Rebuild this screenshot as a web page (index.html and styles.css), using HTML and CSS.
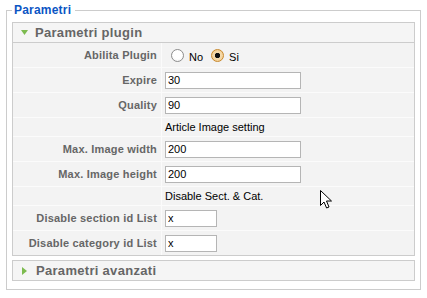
FILE: index.html
```html
<!DOCTYPE html>
<html>
<head>
<meta charset="utf-8">
<link rel="stylesheet" href="styles.css">
</head>
<body>
<fieldset class="box">
  <legend class="box-title">Parametri</legend>
  <div class="panel panel-open">
    <h3 class="panel-head"><svg class="arrow-down" width="7" height="5" viewBox="0 0 7 5"><polygon points="0,0 7,0 3.5,5" fill="#7dbb4f"/></svg>Parametri plugin</h3>
    <div class="params">
      <div class="row">
        <div class="key">Abilita Plugin</div>
        <div class="val">
          <span class="radio"></span><span class="radio-label">No</span>
          <span class="radio radio-on"></span><span class="radio-label">Si</span>
        </div>
      </div>
      <div class="row">
        <div class="key">Expire</div>
        <div class="val"><input class="field" type="text" value="30"></div>
      </div>
      <div class="row">
        <div class="key">Quality</div>
        <div class="val"><input class="field" type="text" value="90"></div>
      </div>
      <div class="row row-text">
        <div class="key"></div>
        <div class="val">Article Image setting</div>
      </div>
      <div class="row">
        <div class="key">Max. Image width</div>
        <div class="val"><input class="field" type="text" value="200"></div>
      </div>
      <div class="row">
        <div class="key">Max. Image height</div>
        <div class="val"><input class="field" type="text" value="200"></div>
      </div>
      <div class="row row-text">
        <div class="key"></div>
        <div class="val">Disable Sect. &amp; Cat.</div>
      </div>
      <div class="row">
        <div class="key">Disable section id List</div>
        <div class="val"><input class="field field-small" type="text" value="x"></div>
      </div>
      <div class="row">
        <div class="key">Disable category id List</div>
        <div class="val"><input class="field field-small" type="text" value="x"></div>
      </div>
    </div>
  </div>
  <div class="panel">
    <h3 class="panel-head"><svg class="arrow-right" width="5" height="8" viewBox="0 0 5 8"><polygon points="0,0 5,4 0,8" fill="#7dbb4f"/></svg>Parametri avanzati</h3>
  </div>
</fieldset>
<svg class="cursor" width="14" height="21" viewBox="0 0 14 21"><path d="M1.5 1.5 L1.5 16.5 L5 13 L7.6 19 L10 18 L7.5 12 L12.5 12 Z" fill="#fff" stroke="#000" stroke-width="1" stroke-linejoin="miter"/></svg>
</body>
</html>
```

FILE: styles.css
```css
html, body {
  margin: 0;
  padding: 0;
  background: #fff;
}

body {
  font-family: "Liberation Sans", Arial, sans-serif;
  position: relative;
  width: 427px;
  height: 298px;
  overflow: hidden;
}

.box {
  margin: 3px 0 0 6px;
  padding: 4px 5px 8px 5px;
  border: 1px solid #ccc;
  width: 403px;
  min-width: 0;
  box-sizing: content-box;
  background: #fff;
}

.box-title {
  padding: 0 4px 0 2px;
  font-size: 12px;
  line-height: 15px;
  font-weight: bold;
  color: #0b55c4;
  letter-spacing: 0.2px;
}

.panel {
  border: 1px solid #ccc;
  background: #f4f4f4;
}

.panel + .panel {
  margin-top: 4px;
}

.panel-head {
  margin: 0;
  height: 19px;
  display: flex;
  align-items: center;
  padding-left: 8px;
  font-size: 13px;
  letter-spacing: 0.3px;
  font-weight: bold;
  color: #666;
  background: #f5f5f5;
}

.panel-open .panel-head {
  border-bottom: 1px solid #ccc;
}

.arrow-down {
  margin-right: 7px;
  flex: none;
}

.arrow-right {
  margin-left: 1px;
  margin-right: 9px;
  flex: none;
}

.params {
  display: flex;
  flex-direction: column;
  gap: 1px;
  background: #fbfbfb;
}

.row {
  display: grid;
  grid-template-columns: 148px 252px;
  column-gap: 1px;
  height: 24px;
}

.row-text {
  height: 18px;
}

.key {
  background: #f3f3f3;
  display: flex;
  align-items: center;
  justify-content: flex-end;
  padding-right: 4px;
  font-size: 11px;
  font-weight: bold;
  color: #666;
  letter-spacing: 0.2px;
  white-space: nowrap;
}

.val {
  background: #f3f3f3;
  display: flex;
  align-items: center;
  padding-left: 3px;
  font-size: 11px;
  color: #000;
  white-space: nowrap;
}

.field {
  width: 136px;
  height: 17px;
  box-sizing: border-box;
  margin: 0;
  border: 1px solid #b5b5b5;
  background: #fff;
  padding: 0 2px;
  font-family: "Liberation Sans", Arial, sans-serif;
  font-size: 11px;
  color: #000;
  outline: none;
}

.field-small {
  width: 52px;
}

.radio {
  width: 13px;
  height: 13px;
  box-sizing: border-box;
  border-radius: 50%;
  border: 1px solid #8c8c8c;
  background: radial-gradient(circle at 50% 40%, #fff 0, #fff 50%, #ececec 100%);
  margin-left: 6px;
  flex: none;
}

.radio-on {
  margin-left: 8px;
  border-color: #c8892e;
  background: radial-gradient(circle, #111 0, #111 2.3px, #f6dcae 3px, #f1c680 100%);
}

.radio-label {
  margin-left: 5px;
  padding-top: 4px;
  font-size: 11px;
  color: #000;
}

.cursor {
  position: absolute;
  left: 319px;
  top: 189px;
}
```
